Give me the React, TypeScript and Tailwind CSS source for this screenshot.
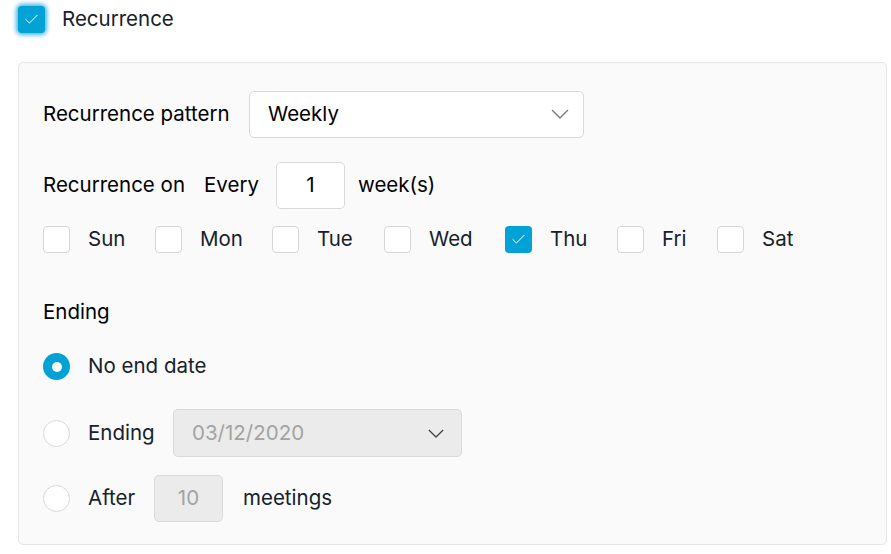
import { Check } from 'lucide-react';

const days = [
  { label: 'Sun', checked: false, w: 'w-[37px]' },
  { label: 'Mon', checked: false, w: 'w-[42px]' },
  { label: 'Tue', checked: false, w: 'w-[37px]' },
  { label: 'Wed', checked: false, w: 'w-[46px]' },
  { label: 'Thu', checked: true, w: 'w-[37px]' },
  { label: 'Fri', checked: false, w: 'w-[25px]' },
  { label: 'Sat', checked: false, w: 'w-[33px]' },
];

function Chevron({ className }: { className: string }) {
  return (
    <svg viewBox="0 0 18 10" className={className} fill="none" stroke="currentColor" strokeWidth={1.4}>
      <polyline points="1,1 9,9 17,1" />
    </svg>
  );
}

function Box({ checked }: { checked: boolean }) {
  return checked ? (
    <span className="flex h-[27px] w-[27px] shrink-0 items-center justify-center rounded-[4px] bg-[#02a1d6]">
      <Check className="h-[17px] w-[17px] text-white" strokeWidth={1.4} />
    </span>
  ) : (
    <span className="h-[27px] w-[27px] shrink-0 rounded-[4px] border border-[#d6d6d6] bg-white" />
  );
}

function Radio({ checked }: { checked: boolean }) {
  return checked ? (
    <span className="flex h-[27px] w-[27px] shrink-0 items-center justify-center rounded-full bg-[#02a1d6]">
      <span className="h-[10px] w-[10px] rounded-full bg-white" />
    </span>
  ) : (
    <span className="h-[27px] w-[27px] shrink-0 rounded-full border border-[#d9d9d9] bg-white" />
  );
}

export default function App() {
  return (
    <div className="h-[554px] w-[891px] bg-white font-['Inter',sans-serif] text-[20.5px] text-[#17212b]">
      {/* Header checkbox */}
      <div className="flex h-[38px] items-center gap-[17px] pl-[18px] pt-[1px]">
        <span className="flex h-[27px] w-[27px] items-center justify-center rounded-[4px] bg-[#02a1d6] shadow-[0_0_4px_2px_rgba(2,161,214,0.75)]">
          <Check className="h-[17px] w-[17px] text-white" strokeWidth={1.4} />
        </span>
        <span>Recurrence</span>
      </div>

      <div className="ml-[18px] mt-[24px] w-[869px] rounded-[5px] border border-[#e6e6e6] bg-[#fafafa] pb-[22px] pl-[24px] pt-[27px]">
        {/* Pattern */}
        <div className="flex h-[47px] items-center pt-[1px]">
          <span className="w-[206px] text-black">Recurrence pattern</span>
          <div className="flex h-[47px] w-[335px] items-center justify-between rounded-[5px] border border-[#d9d9d9] bg-white pl-[18px] pr-[14px] text-black">
            <span>Weekly</span>
            <Chevron className="h-[10px] w-[18px] text-[#7a7a7a]" />
          </div>
        </div>

        {/* Every */}
        <div className="mt-[25px] flex h-[47px] items-center text-black">
          <span className="w-[161px]">Recurrence on</span>
          <span className="w-[72px]">Every</span>
          <div className="flex h-[47px] w-[69px] items-center justify-center rounded-[5px] border border-[#d9d9d9] bg-white">
            1
          </div>
          <span className="ml-[13px]">week(s)</span>
        </div>

        {/* Days */}
        <div className="mt-[17px] flex h-[27px] items-center gap-[30px]">
          {days.map((d) => (
            <div key={d.label} className="flex items-center gap-[18px]">
              <Box checked={d.checked} />
              <span className={d.w}>{d.label}</span>
            </div>
          ))}
        </div>

        <div className="mt-[47px] h-[24px] leading-[24px] text-black">Ending</div>

        <div className="mt-[29px] flex h-[27px] items-center gap-[18px]">
          <Radio checked />
          <span>No end date</span>
        </div>

        <div className="mt-[29px] flex h-[48px] items-center">
          <Radio checked={false} />
          <span className="ml-[18px] w-[85px]">Ending</span>
          <div className="flex h-[48px] w-[289px] items-center justify-between rounded-[5px] border border-[#d9d9d9] bg-[#ebebeb] pl-[18px] pr-[17px] text-[#a3a3a3]">
            <span>03/12/2020</span>
            <Chevron className="h-[9px] w-[16px] text-[#444]" />
          </div>
        </div>

        <div className="mt-[18px] flex h-[47px] items-center">
          <Radio checked={false} />
          <span className="ml-[18px] w-[66px]">After</span>
          <div className="flex h-[47px] w-[69px] items-center justify-center rounded-[5px] border border-[#d9d9d9] bg-[#ebebeb] text-[#a3a3a3]">
            10
          </div>
          <span className="ml-[20px]">meetings</span>
        </div>
      </div>
    </div>
  );
}
